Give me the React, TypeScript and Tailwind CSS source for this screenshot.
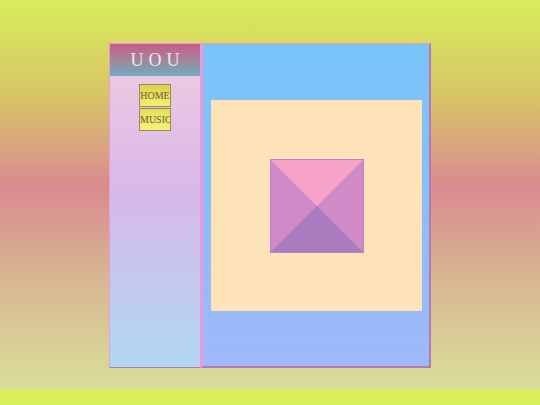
export default function App() {
  return (
    <div className="h-[405px] w-[540px] bg-[#d9f05a] font-['Liberation_Serif',serif]">
      <div className="h-[390px] bg-[linear-gradient(to_bottom,#d9ec5a_0%,#d8c468_25%,#d98a90_48%,#d8b492_70%,#d8e098_100%)] pt-[43px]">
        <div className="ml-[109px] flex h-[325px] w-[322px]">
          {/* sidebar */}
          <aside className="flex w-[92px] flex-col border border-[#ee98dc] border-b-[#b878b8] bg-[linear-gradient(to_bottom,#f3cce0,#d8b8e8_45%,#b0d8f2)]">
            <div className="flex h-[32px] items-center justify-center bg-[linear-gradient(to_bottom,#c45c88,#a88298_45%,#70aac2)] text-[18px] tracking-[5px] text-[#f2e8f2]">
              <span className="pl-[5px]">UOU</span>
            </div>
            <nav className="mt-[8px] flex flex-col items-center gap-px">
              <button className="h-[23px] w-[32px] border border-[#988860] bg-[linear-gradient(to_bottom,#dcd04c,#f2f070)] text-[10px] leading-none text-[#6e5c3a]">
                HOME
              </button>
              <button className="h-[23px] w-[32px] overflow-hidden border border-[#988860] bg-[linear-gradient(to_bottom,#e4e05a,#f2f276)] text-[10px] leading-none text-[#6e5c3a]">
                MUSIC
              </button>
            </nav>
          </aside>
          {/* main */}
          <main className="flex flex-1 flex-col items-center border-t border-l-2 border-[#ee98dc] border-r-2 border-r-[#b878b8] border-b-2 border-b-[#b878b8] bg-[linear-gradient(to_bottom,#78c4fa,#9fb8f8)]">
            <div className="mt-[56px] ml-px flex h-[211px] w-[211px] items-center justify-center bg-[#fee2b8]">
              <div className="border border-[#bc84c4]">
                <div className="h-0 w-0 border-[46px] border-t-[#f6a2c8] border-r-[#d08ac8] border-b-[#a97cc0] border-l-[#d08ac8]" />
              </div>
            </div>
          </main>
        </div>
      </div>
    </div>
  );
}
